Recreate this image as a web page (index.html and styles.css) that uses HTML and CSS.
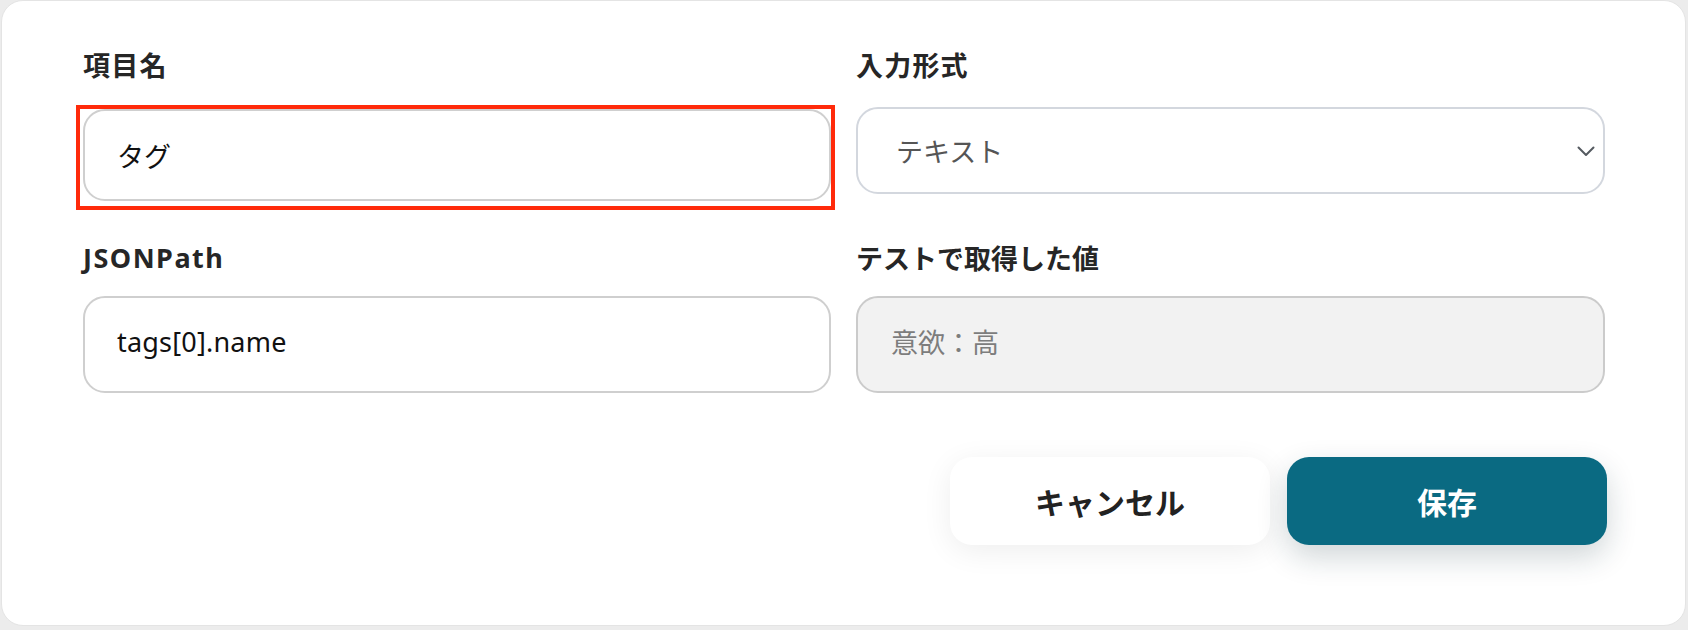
FILE: index.html
```html
<!DOCTYPE html>
<html lang="ja">
<head>
<meta charset="utf-8">
<title>項目設定</title>
<link rel="stylesheet" href="styles.css">
</head>
<body>
<div class="card">
  <div class="grid">
    <div class="field">
      <div class="label">項目名</div>
      <div class="input-wrap">
        <div class="input first">タグ</div>
        <div class="highlight"></div>
      </div>
    </div>
    <div class="field">
      <div class="label">入力形式</div>
      <div class="select">
        <span>テキスト</span>
        <svg class="chev" width="18" height="11" viewBox="0 0 18 11"><path d="M1.5 1.5 L9 9 L16.5 1.5" fill="none" stroke="#555a60" stroke-width="2" stroke-linecap="round" stroke-linejoin="round"/></svg>
      </div>
    </div>
    <div class="field row2">
      <div class="label latin">JSONPath</div>
      <div class="input tall latin">tags[0].name</div>
    </div>
    <div class="field row2">
      <div class="label tight">テストで取得した値</div>
      <div class="input tall readonly">意欲：高</div>
    </div>
  </div>
  <div class="actions">
    <button class="btn cancel">キャンセル</button>
    <button class="btn save">保存</button>
  </div>
</div>
</body>
</html>
```

FILE: styles.css
```css
html, body {
  margin: 0;
  padding: 0;
}
body {
  width: 1688px;
  height: 630px;
  background: #ececec;
  font-family: "Noto Sans", "Noto Sans CJK JP", sans-serif;
  overflow: hidden;
}
.card {
  box-sizing: border-box;
  margin-left: 1px;
  width: 1685px;
  height: 626px;
  background: #ffffff;
  border: 1px solid #e4e4e4;
  border-radius: 22px;
  padding: 47px 80px 0 81px;
}
.grid {
  display: grid;
  grid-template-columns: 748px 749px;
  column-gap: 25px;
}
.field {
  display: flex;
  flex-direction: column;
}
.label {
  font-family: "Noto Sans CJK JP", sans-serif;
  font-weight: 700;
  font-size: 27px;
  line-height: 34px;
  letter-spacing: 1.2px;
  color: #262626;
  height: 34px;
}
.label.tight {
  letter-spacing: 0;
}
.label.latin {
  font-family: "Noto Sans", "Noto Sans CJK JP", sans-serif;
  letter-spacing: 1.5px;
}
.input-wrap {
  position: relative;
  margin-top: 27px;
}
.input {
  box-sizing: border-box;
  border: 2px solid #cfcfcf;
  border-radius: 22px;
  background: #fff;
  padding-left: 32px;
  display: flex;
  align-items: center;
  font-family: "Noto Sans CJK JP", sans-serif;
  font-size: 27px;
  color: #111;
}
.input.first {
  height: 92px;
}
.highlight {
  position: absolute;
  left: -7px;
  top: -4px;
  right: -4px;
  bottom: -9px;
  border: 4px solid #ff2a0a;
}
.select {
  box-sizing: border-box;
  margin-top: 25px;
  height: 87px;
  border: 2px solid #d3d7de;
  border-radius: 22px;
  background: #fff;
  padding: 0 8px 0 38px;
  display: flex;
  align-items: center;
  justify-content: space-between;
  font-family: "Noto Sans CJK JP", sans-serif;
  font-size: 27px;
  color: #555;
}
.chev {
  display: block;
  margin-top: 2px;
}
.row2 {
  margin-top: 40px;
}
.input.tall {
  margin-top: 21px;
  height: 97px;
  padding-bottom: 6px;
}
.input.latin {
  font-family: "Noto Sans", sans-serif;
  font-size: 27px;
  color: #111;
  letter-spacing: 0.2px;
}
.input.readonly {
  background: #f2f2f2;
  border-color: #cbcbcb;
  color: #7d7d7d;
  padding-left: 33px;
}
.actions {
  display: flex;
  justify-content: flex-end;
  gap: 17px;
  margin-top: 64px;
  margin-right: -2px;
}
.btn {
  width: 320px;
  height: 88px;
  border: none;
  border-radius: 22px;
  font-family: "Noto Sans CJK JP", sans-serif;
  font-weight: 700;
  font-size: 30px;
  cursor: pointer;
}
.cancel {
  background: #fff;
  color: #222;
  box-shadow: 0 6px 30px rgba(0, 0, 0, 0.07);
}
.save {
  background: #0a6a82;
  color: #fff;
  box-shadow: 0 12px 30px rgba(20, 50, 60, 0.2);
}
```
